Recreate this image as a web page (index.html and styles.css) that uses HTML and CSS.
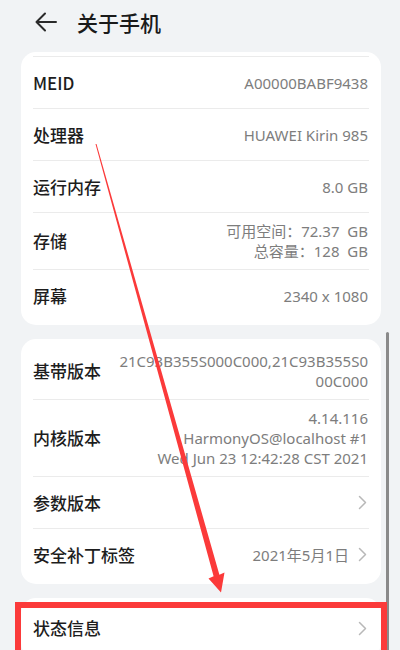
FILE: index.html
```html
<!DOCTYPE html>
<html lang="zh-CN">
<head>
<meta charset="utf-8">
<title>关于手机</title>
<link rel="stylesheet" href="styles.css">
</head>
<body>
<div class="page">
  <header class="header">
    <svg class="back" width="22" height="20" viewBox="0 0 22 20" aria-hidden="true">
      <path d="M10 1.5 L1.5 10 L10 18.5 M1.5 10 H21" fill="none" stroke="#2a2a2a" stroke-width="2" stroke-linecap="round" stroke-linejoin="round"/>
    </svg>
    <h1 class="title">关于手机</h1>
  </header>

  <main class="list">
    <section class="card">
      <div class="row cut">
        <span class="label">MEID</span>
        <span class="value">A00000BABF9438</span>
      </div>
      <div class="row">
        <span class="label">处理器</span>
        <span class="value">HUAWEI Kirin 985</span>
      </div>
      <div class="row">
        <span class="label">运行内存</span>
        <span class="value">8.0 GB</span>
      </div>
      <div class="row multi">
        <span class="label">存储</span>
        <span class="value lines">
          <span class="line">可用空间：72.37&nbsp;&nbsp;GB</span>
          <span class="line">总容量：128&nbsp;&nbsp;GB</span>
        </span>
      </div>
      <div class="row">
        <span class="label">屏幕</span>
        <span class="value">2340 x 1080</span>
      </div>
    </section>

    <section class="card">
      <div class="row multi">
        <span class="label">基带版本</span>
        <span class="value lines">
          <span class="line">21C93B355S000C000,21C93B355S0</span>
          <span class="line">00C000</span>
        </span>
      </div>
      <div class="row multi">
        <span class="label">内核版本</span>
        <span class="value lines">
          <span class="line">4.14.116</span>
          <span class="line">HarmonyOS@localhost #1</span>
          <span class="line">Wed Jun 23 12:42:28 CST 2021</span>
        </span>
      </div>
      <div class="row">
        <span class="label">参数版本</span>
        <span class="value with-chev">
          <svg class="chev" width="9" height="15" viewBox="0 0 9 15" aria-hidden="true"><path d="M1.5 1.5 L7.5 7.5 L1.5 13.5" fill="none" stroke="#b8b8b8" stroke-width="1.5" stroke-linecap="round" stroke-linejoin="round"/></svg>
        </span>
      </div>
      <div class="row">
        <span class="label">安全补丁标签</span>
        <span class="value with-chev">2021年5月1日
          <svg class="chev" width="9" height="15" viewBox="0 0 9 15" aria-hidden="true"><path d="M1.5 1.5 L7.5 7.5 L1.5 13.5" fill="none" stroke="#b8b8b8" stroke-width="1.5" stroke-linecap="round" stroke-linejoin="round"/></svg>
        </span>
      </div>
    </section>

    <section class="card">
      <div class="row">
        <span class="label">状态信息</span>
        <span class="value with-chev">
          <svg class="chev" width="9" height="15" viewBox="0 0 9 15" aria-hidden="true"><path d="M1.5 1.5 L7.5 7.5 L1.5 13.5" fill="none" stroke="#b8b8b8" stroke-width="1.5" stroke-linecap="round" stroke-linejoin="round"/></svg>
        </span>
      </div>
    </section>
  </main>

  <div class="scrollbar"></div>
  <div class="highlight"></div>
  <svg class="annot" width="400" height="650" viewBox="0 0 400 650" aria-hidden="true">
    <polygon points="95.5,144.1 96.5,143.9 219.4,574.7 224.5,572.5 221,592.5 208.5,578.5 213.6,576.3" fill="#fb3a3a"/>
  </svg>
</div>
</body>
</html>
```

FILE: styles.css
```css
* { box-sizing: border-box; }

html, body {
  margin: 0;
  padding: 0;
  background: #f1f3f5;
}

body {
  font-family: "Noto Sans", "Noto Sans CJK SC", sans-serif;
  color: #1c1c1c;
}

.page {
  position: relative;
  width: 400px;
  height: 650px;
  overflow: hidden;
}

.header {
  height: 44px;
  display: flex;
  align-items: center;
  padding-left: 35px;
  gap: 20px;
}

.back {
  display: block;
  flex: none;
}

.title {
  margin: 0;
  font-size: 21px;
  font-weight: 500;
  line-height: 28px;
  color: #1a1a1a;
  font-family: "Noto Sans CJK SC", sans-serif;
}

.list {
  margin-top: 8px;
  padding-left: 21px;
  width: 381px;
  display: flex;
  flex-direction: column;
  gap: 14px;
}

.card {
  background: #ffffff;
  border-radius: 15px;
  padding: 4px 12px;
}

.row {
  display: flex;
  justify-content: space-between;
  align-items: center;
  min-height: 52px;
}

.row + .row,
.row.cut {
  border-top: 1px solid #ebebeb;
}

.row.multi {
  padding: 8px 0;
  min-height: 0;
}

.label {
  font-family: "Noto Sans CJK SC", sans-serif;
  font-size: 17px;
  font-weight: 500;
  line-height: 20px;
  color: #1d1d1d;
  flex: none;
}

.value {
  font-size: 15px;
  line-height: 20px;
  color: #7d7d7d;
  text-align: right;
  margin-right: 1px;
}

.lines {
  display: flex;
  flex-direction: column;
  align-items: flex-end;
}

.line {
  display: block;
  white-space: nowrap;
}

.with-chev {
  display: flex;
  align-items: center;
  gap: 9px;
  margin-right: 2px;
}

.chev {
  display: block;
}

.scrollbar {
  position: absolute;
  left: 386px;
  top: 332px;
  width: 3px;
  height: 330px;
  border-radius: 2px;
  background: #8a8a8a;
}

.highlight {
  position: absolute;
  left: 15px;
  top: 602px;
  width: 372px;
  height: 70px;
  border: 6px solid #fb3a3a;
}

.annot {
  position: absolute;
  left: 0;
  top: 0;
  pointer-events: none;
}
```
